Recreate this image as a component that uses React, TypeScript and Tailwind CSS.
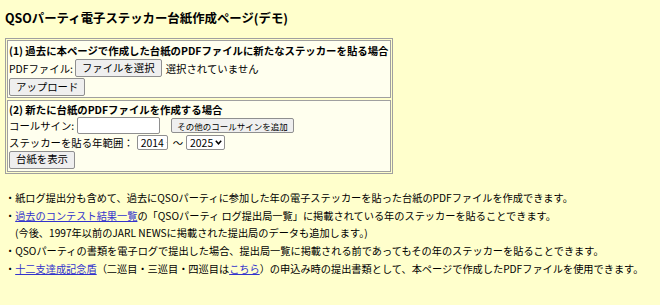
import React from "react";

const btn =
  "inline-flex items-center justify-center bg-[#efefef] border border-[#8f8f8f] rounded-[2px] text-black leading-none";

export default function App() {
  return (
    <div
      className="min-h-screen w-full bg-[#ffffcc] text-black px-[5px] pt-[9px]"
      style={{ fontFamily: '"Noto Sans CJK JP", "Noto Sans", sans-serif' }}
    >
      <h1 className="text-[12.4px] font-bold leading-[18px] m-0">
        QSOパーティ電子ステッカー台紙作成ページ(デモ)
      </h1>

      <div className="mt-[11px] w-[388px] border border-[#a0a0a0] p-[1px] flex flex-col gap-[2px] text-[10.4px]">
        <div className="border border-[#a0a0a0] bg-[#ffffee] px-[1px] pt-[2px] pb-[1px] h-[58px] flex flex-col">
          <div className="font-bold leading-[15px]">
            (1) 過去に本ページで作成した台紙のPDFファイルに新たなステッカーを貼る場合
          </div>
          <div className="flex items-center h-[20px] mt-[1px]">
            <span>PDFファイル:</span>
            <span className={btn + " ml-[2px] h-[18px] px-[6px] text-[10.4px]"}>ファイルを選択</span>
            <span className="ml-[4px]">選択されていません</span>
          </div>
          <div className="flex items-center h-[19px]">
            <span className={btn + " h-[18px] px-[6px] text-[10.4px]"}>アップロード</span>
          </div>
        </div>

        <div className="border border-[#a0a0a0] bg-[#ffffee] px-[1px] pt-[1px] pb-[2px] h-[72px] flex flex-col">
          <div className="font-bold leading-[15px]">(2) 新たに台紙のPDFファイルを作成する場合</div>
          <div className="flex items-center h-[19px]">
            <span>コールサイン:</span>
            <span className="ml-[3px] w-[83px] h-[17px] bg-white border border-[#8f8f8f] rounded-[2px]"></span>
            <span className={btn + " ml-[11px] h-[15px] px-[5px] text-[8.5px]"}>その他のコールサインを追加</span>
          </div>
          <div className="flex items-center h-[16px]">
            <span>ステッカーを貼る年範囲：</span>
            <span className="ml-[3px] h-[15px] w-[31px] bg-white border border-[#8f8f8f] rounded-[2px] flex items-center pl-[3px] gap-[2px] text-[10.4px]">
              2014
              <svg width="7" height="5" viewBox="0 0 7 5"><path d="M0.8 0.8 L3.5 3.8 L6.2 0.8" stroke="black" strokeWidth="1.5" fill="none" /></svg>
            </span>
            <span className="ml-[5px]">～</span>
            <span className="ml-[3px] h-[15px] w-[39px] bg-white border border-[#8f8f8f] rounded-[2px] flex items-center pl-[3px] gap-[2px] text-[10.4px]">
              2025
              <svg width="7" height="5" viewBox="0 0 7 5"><path d="M0.8 0.8 L3.5 3.8 L6.2 0.8" stroke="black" strokeWidth="1.5" fill="none" /></svg>
            </span>
          </div>
          <div className="flex items-center h-[20px]">
            <span className={btn + " h-[18px] px-[6px] text-[10.4px]"}>台紙を表示</span>
          </div>
        </div>
      </div>

      <ul className="mt-[15px] text-[10.2px] leading-[17px] list-none p-0 m-0 flex flex-col gap-[1px] whitespace-nowrap">
        <li>・紙ログ提出分も含めて、過去にQSOパーティに参加した年の電子ステッカーを貼った台紙のPDFファイルを作成できます。</li>
        <li>
          ・<a className="text-[#3333cc] underline">過去のコンテスト結果一覧</a>の「QSOパーティ ログ提出局一覧」に掲載されている年のステッカーを貼ることできます。
          <br />
          <span className="pl-[10px]">(今後、1997年以前のJARL NEWSに掲載された提出局のデータも追加します。)</span>
        </li>
        <li>・QSOパーティの書類を電子ログで提出した場合、提出局一覧に掲載される前であってもその年のステッカーを貼ることできます。</li>
        <li>
          ・<a className="text-[#3333cc] underline">十二支達成記念盾</a>（二巡目・三巡目・四巡目は<a className="text-[#3333cc] underline">こちら</a>）の申込み時の提出書類として、本ページで作成したPDFファイルを使用できます。
        </li>
      </ul>
    </div>
  );
}
